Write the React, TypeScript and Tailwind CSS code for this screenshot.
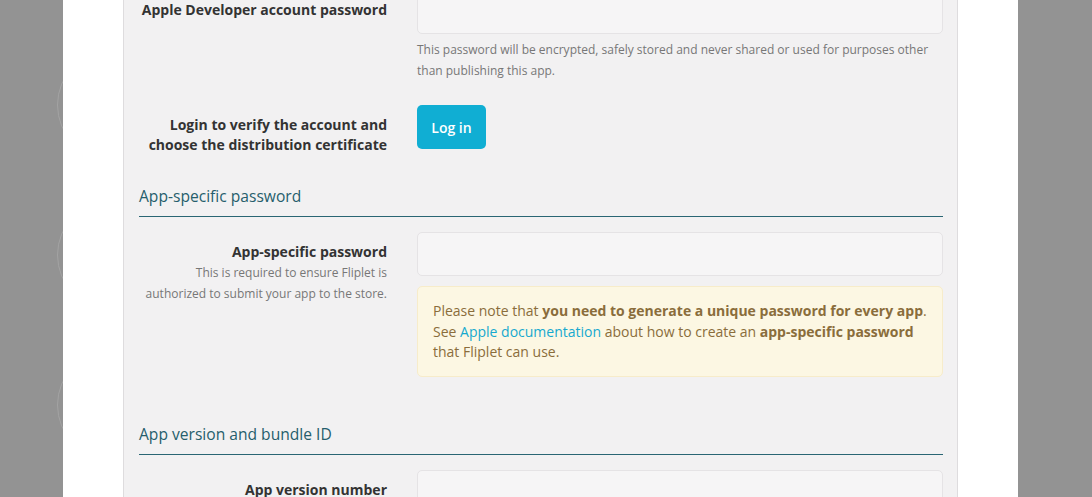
import React from 'react';

const font = { fontFamily: '"Open Sans", "Liberation Sans", sans-serif' };

function Label({ children, sub }: { children: React.ReactNode; sub?: React.ReactNode }) {
  return (
    <div className="w-[248px] shrink-0 pt-[10px] text-right">
      <div className="text-[14px] font-bold leading-[20px] text-[#333333]">{children}</div>
      {sub && <div className="text-[12px] leading-[21px] text-[#777777]">{sub}</div>}
    </div>
  );
}

function TextInput() {
  return <div className="h-[44px] w-full rounded-[5px] border border-[#e5e3e5] bg-[#f6f5f6]" />;
}

function SectionTitle({ children }: { children: React.ReactNode }) {
  return (
    <h3 className="border-b border-[#2a6674] pb-[9px] text-[15.6px] leading-[22px] text-[#265e6c]">
      {children}
    </h3>
  );
}

export default function App() {
  return (
    <div className="relative h-[497px] w-[1092px] overflow-hidden bg-[#939393]" style={font}>
      {/* faint backdrop circles peeking out behind the modal */}
      <div className="absolute left-[57px] top-[50px] h-[110px] w-[110px] rounded-full border border-[#a3a3a3]" />
      <div className="absolute left-[57px] top-[200px] h-[110px] w-[110px] rounded-full border border-[#a3a3a3]" />
      <div className="absolute left-[57px] top-[350px] h-[110px] w-[110px] rounded-full border border-[#a3a3a3]" />

      <div className="relative ml-[63px] mr-[74px] flex h-full flex-col bg-white px-[60px]">
        <div className="flex flex-1 flex-col border-x border-[#dedcde] bg-[#f2f1f2] pl-[15px] pr-[14px]">
          <div className="-mt-[10px] flex flex-col">
            {/* Apple developer password */}
            <div className="flex gap-[30px]">
              <Label>Apple Developer account password</Label>
              <div className="flex-1">
                <TextInput />
                <p className="mt-[5px] text-[12px] leading-[21px] text-[#777777]">
                  This password will be encrypted, safely stored and never shared or used for purposes other than publishing this app.
                </p>
              </div>
            </div>

            {/* Log in */}
            <div className="mt-[24px] flex gap-[30px]">
              <Label>
                Login to verify the account and
                <br />
                choose the distribution certificate
              </Label>
              <div className="flex-1">
                <button className="h-[44px] w-[69px] rounded-[5px] bg-[#10aed3] text-[14px] font-semibold text-white">
                  Log in
                </button>
              </div>
            </div>

            {/* App-specific password */}
            <div className="mt-[30px]">
              <SectionTitle>App-specific password</SectionTitle>
            </div>
            <div className="mt-[15px] flex gap-[30px]">
              <Label
                sub={
                  <>
                    This is required to ensure Fliplet is
                    <br />
                    authorized to submit your app to the store.
                  </>
                }
              >
                App-specific password
              </Label>
              <div className="flex-1">
                <TextInput />
                <div className="mt-[10px] rounded-[5px] border border-[#f7ecca] bg-[#fcf7e3] px-[15px] pb-[13px] pt-[14px] text-[14px] leading-[20.5px] text-[#8a6d3b]">
                  Please note that <strong>you need to generate a unique password for every app</strong>.
                  <br />
                  See <a className="text-[#16a9cf]">Apple documentation</a> about how to create an{' '}
                  <strong>app-specific password</strong>
                  <br />
                  that Fliplet can use.
                </div>
              </div>
            </div>

            {/* App version and bundle id */}
            <div className="mt-[46px]">
              <SectionTitle>App version and bundle ID</SectionTitle>
            </div>
            <div className="mt-[15px] flex gap-[30px]">
              <Label>App version number</Label>
              <div className="flex-1">
                <TextInput />
              </div>
            </div>
          </div>
        </div>
      </div>
    </div>
  );
}
